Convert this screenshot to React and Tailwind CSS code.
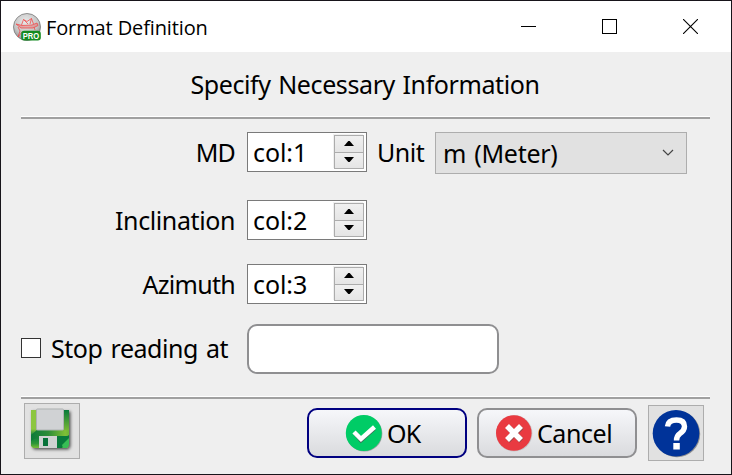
import React from 'react';

function AppIcon() {
  return (
    <svg viewBox="0 0 28 28" className="h-7 w-7 shrink-0">
      <defs>
        <radialGradient id="ball" cx="45%" cy="30%" r="70%">
          <stop offset="0" stopColor="#e8e8e8" />
          <stop offset="0.65" stopColor="#c4c4c4" />
          <stop offset="1" stopColor="#8d8d8d" />
        </radialGradient>
      </defs>
      <circle cx="14" cy="14" r="13.5" fill="url(#ball)" stroke="#777" strokeWidth="0.8" />
      <g fill="none" stroke="#f04c4c" strokeWidth="0.8">
        <path d="M3 11L9 12.5L19 12L24 10L25 12.5L20 15L8 15Z" fill="#f04c4c" fillOpacity=".35" />
        <path d="M8.5 12L10.5 6.5L14 8.5L18.5 5.5L20.5 11M10.5 6.5L15 11M18.5 5.5L17 11M5 14L7 18L5 24L9 19M21 14L22 17" />
      </g>
      <rect x="8.2" y="17.8" width="19.6" height="9.8" rx="3" fill="#138a20" />
      <text x="18" y="25.6" textAnchor="middle" fill="#fff" fontSize="8.3" fontWeight="700" fontFamily="Liberation Sans, sans-serif" textLength="16.5" lengthAdjust="spacingAndGlyphs">PRO</text>
    </svg>
  );
}

function TitleBar() {
  return (
    <div className="flex h-[51px] shrink-0 items-center bg-white pl-3">
      <AppIcon />
      <div className="ml-[5px] flex-1 pt-[2px] whitespace-nowrap font-['Open_Sans',sans-serif] text-[20px] leading-[28px] tracking-[-0.12px]">Format Definition</div>
      <svg width="15" height="15" viewBox="0 0 15 15" className="mr-[66px]" shapeRendering="crispEdges"><path d="M0 7.5H15" stroke="#000" /></svg>
      <svg width="15" height="15" viewBox="0 0 15 15" className="mr-[66px]" shapeRendering="crispEdges"><path d="M.5 .5H14.5V14.5H.5Z" fill="none" stroke="#000" /></svg>
      <svg width="15" height="15" viewBox="0 0 15 15" className="mr-[33px]"><path d="M0 0L15 15M15 0L0 15" stroke="#000" strokeWidth="1.1" /></svg>
    </div>
  );
}

function Separator() {
  return <div className="ml-5 h-[3px] w-[689px] shrink-0 border-t border-white bg-[#a0a0a0]" />;
}

function Arrow({ down }) {
  return (
    <svg width="10" height="5" viewBox="0 0 10 5">
      <path d={down ? 'M0 0H10L5.7 5H4.3Z' : 'M0 5H10L5.7 0H4.3Z'} fill="#000" />
    </svg>
  );
}

function SpinBox({ value }) {
  return (
    <div className="flex h-10 w-[120px] shrink-0 items-center justify-between border border-[#7a7a7a] bg-white pr-[2px] pl-[5px]">
      <span className="whitespace-nowrap tracking-[-0.1px]">{value}</span>
      <div className="flex h-[34px] w-[30px] flex-col border border-[#acacac] bg-[#acacac] shadow-[-1px_-1px_0_#f0f0f0]">
        <div className="flex h-[16px] items-center justify-center bg-linear-to-b from-[#f0f0f0] to-[#e5e5e5] pb-[2px]"><Arrow /></div>
        <div className="mt-px flex h-[15px] items-center justify-center bg-linear-to-b from-[#f0f0f0] to-[#e5e5e5] pb-[2px]"><Arrow down /></div>
      </div>
    </div>
  );
}

function SaveIcon() {
  return (
    <svg width="48" height="48" viewBox="0 0 48 48">
      <defs>
        <linearGradient id="disk" x1="0" y1="0" x2="0" y2="1">
          <stop offset="0" stopColor="#8cc63f" />
          <stop offset="0.5" stopColor="#8cc63f" />
          <stop offset="0.68" stopColor="#087a3b" />
          <stop offset="0.88" stopColor="#2d9638" />
          <stop offset="1" stopColor="#7abc38" />
        </linearGradient>
        <linearGradient id="band" x1="0" y1="0" x2="1" y2="0">
          <stop offset="0" stopColor="#0c7a3a" />
          <stop offset="0.45" stopColor="#2c8c38" />
          <stop offset="0.9" stopColor="#7fbf36" />
          <stop offset="1" stopColor="#6db536" />
        </linearGradient>
        <linearGradient id="side" x1="0" y1="0" x2="0" y2="1">
          <stop offset="0" stopColor="#087a3b" />
          <stop offset="1" stopColor="#82bd35" />
        </linearGradient>
        <filter id="diskShadow" x="-20%" y="-20%" width="140%" height="140%">
          <feDropShadow dx="1.5" dy="1.5" stdDeviation="1.5" floodColor="#000" floodOpacity="0.65" />
        </filter>
      </defs>
      <path d="M3 3H41V38L39 41H5L3 39Z" fill="url(#disk)" filter="url(#diskShadow)" />
      <path d="M35 3H41V25H35Z" fill="url(#side)" />
      <path d="M9 23H41V28L36 31H8L3 34V28Z" fill="url(#band)" />
      <rect x="8.5" y="2" width="27" height="21" rx="1" fill="#d0d2d4" stroke="#aeb2b2" />
      <rect x="11" y="29" width="18" height="12" fill="#cfd2d2" />
      <rect x="15" y="31" width="5" height="8" fill="#08723a" />
      <path d="M29 29H41V34L34 41H29Z" fill="#087a3b" />
      <path d="M34 38L41 31V38L39 41H35Z" fill="#38bd55" />
    </svg>
  );
}

function OkIcon() {
  return (
    <svg width="38" height="38" viewBox="0 0 38 38" className="shrink-0">
      <circle cx="19.4" cy="19.6" r="18" fill="#777" opacity=".6" />
      <circle cx="18.8" cy="19" r="18" fill="#0c6" />
      <path d="M10 19L16 26L29 14.5" fill="none" stroke="#41705b" strokeWidth="4.5" />
      <path d="M9 18L16 25L29.5 13" fill="none" stroke="#fff" strokeWidth="4.5" />
    </svg>
  );
}

function CancelIcon() {
  return (
    <svg width="38" height="38" viewBox="0 0 38 38" className="shrink-0">
      <circle cx="19.2" cy="19.3" r="18.2" fill="#aaa" opacity=".5" />
      <circle cx="18.8" cy="19" r="17.8" fill="#e93a41" />
      <path d="M12 12L26 26M26 12L12 26" stroke="#9b4448" strokeWidth="5.8" transform="translate(.5 .6)" />
      <path d="M12 12L26 26M26 12L12 26" stroke="#fff" strokeWidth="5.6" />
    </svg>
  );
}

function HelpIcon() {
  return (
    <svg width="50" height="50" viewBox="0 0 50 50">
      <circle cx="26" cy="26" r="23.2" fill="#666" opacity=".65" />
      <circle cx="25" cy="25.3" r="23.3" fill="#039" />
      <path d="M16.5 18.5C17 13 21 12 25.5 12C31 12 33.5 14.5 33.5 18.5C33.5 22 32 23.5 29 25.5C26 27.5 25.5 29 25.5 32.5" fill="none" stroke="#fff" strokeWidth="5.4" />
      <rect x="22.3" y="35" width="6.5" height="6.5" fill="#fff" />
    </svg>
  );
}

export default function App() {
  return (
    <div className="flex h-[475px] w-[732px] flex-col overflow-hidden border border-[#17141a] bg-[#efefef] font-['Noto_Sans',sans-serif] text-[25px] leading-[34px] text-black">
      <TitleBar />
      <div className="flex h-16 shrink-0 items-center justify-center pr-[2px] pb-[1px] whitespace-nowrap tracking-[-0.4px] [word-spacing:1.5px]">Specify Necessary Information</div>
      <Separator />
      <div className="mt-[13px] flex h-[42px] shrink-0 items-start">
        <div className="mr-3 flex h-10 w-[234px] items-center justify-end tracking-[-0.8px]">MD</div>
        <SpinBox value="col:1" />
        <div className="ml-[10px] flex h-10 w-[58px] items-center tracking-[-0.5px]">Unit</div>
        <div className="flex h-[42px] w-[252px] items-center justify-between border border-[#adadad] bg-[#e1e1e1] pr-3 pl-[7px]">
          <span className="tracking-[-0.3px] [word-spacing:2px]">m (Meter)</span>
          <svg width="12" height="8" viewBox="0 0 12 8"><path d="M1 1L6 6L11 1" fill="none" stroke="#444" strokeWidth="1.2" /></svg>
        </div>
      </div>
      <div className="mt-[26px] flex h-10 shrink-0 items-center">
        <div className="mr-3 flex w-[234px] justify-end tracking-[-0.4px]">Inclination</div>
        <SpinBox value="col:2" />
      </div>
      <div className="mt-6 flex h-10 shrink-0 items-center">
        <div className="mr-3 flex w-[234px] justify-end tracking-[-0.7px]">Azimuth</div>
        <SpinBox value="col:3" />
      </div>
      <div className="mt-5 flex h-[50px] shrink-0 items-center pl-5">
        <div className="mb-[2px] h-5 w-5 border border-[#333] bg-white" />
        <div className="mb-[2px] ml-[10px] w-[196px] whitespace-nowrap tracking-[-0.45px] [word-spacing:2px]">Stop reading at</div>
        <div className="h-[50px] w-[252px] rounded-[10px] border-2 border-[#8f8f91] bg-white" />
      </div>
      <div className="mt-[22px]"><Separator /></div>
      <div className="flex items-start">
        <div className="mt-1 ml-[23px] flex h-14 w-14 items-center justify-center border border-[#adadad] bg-[#e1e1e1]"><SaveIcon /></div>
        <div className="mt-[9px] ml-[227px] flex h-[50px] w-40 items-center rounded-[10px] border-2 border-[#000080] bg-linear-to-b from-[#f6f7fa] to-[#dadbde] pl-9">
          <OkIcon /><span className="ml-1 tracking-[-0.8px]">OK</span>
        </div>
        <div className="mt-[9px] ml-[10px] flex h-[50px] w-40 items-center rounded-[10px] border-2 border-[#8f8f91] bg-linear-to-b from-[#f6f7fa] to-[#dadbde] pl-4">
          <CancelIcon /><span className="ml-1 tracking-[-0.45px]">Cancel</span>
        </div>
        <div className="mt-[6px] ml-[11px] flex h-14 w-14 items-center justify-center border border-[#adadad] bg-[#e1e1e1]"><HelpIcon /></div>
      </div>
    </div>
  );
}
